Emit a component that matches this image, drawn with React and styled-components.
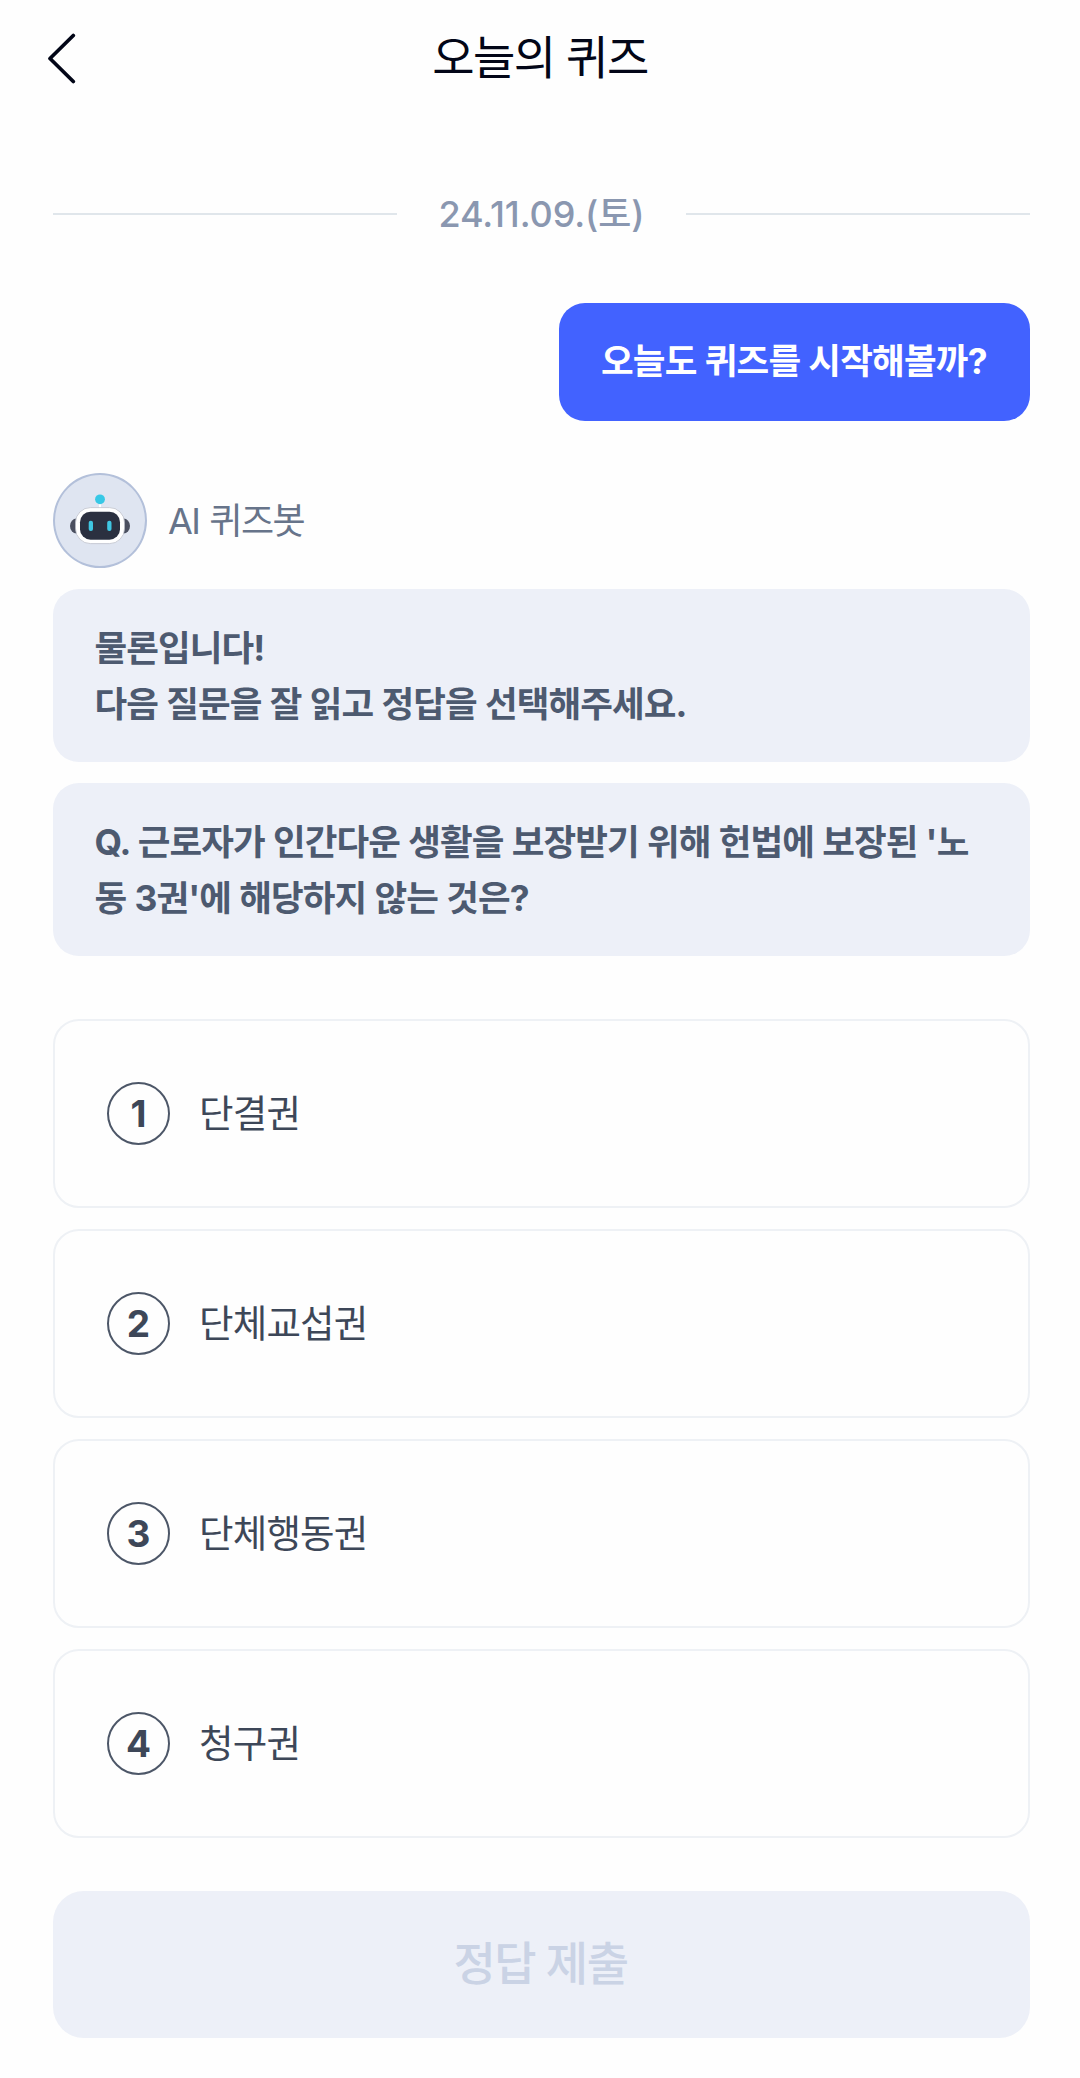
import React, { useState } from "react";
import styled, { createGlobalStyle } from "styled-components";

const options = ["단결권", "단체교섭권", "단체행동권", "청구권"];

const App = () => {
  const [selected, setSelected] = useState(null);
  return (
    <Page>
      <GlobalStyle />
      <Header>
        <BackButton aria-label="뒤로">
          <BackIcon />
        </BackButton>
        <Title>오늘의 퀴즈</Title>
      </Header>
      <DateRow>
        <Line />
        <DateText>24.11.09.(토)</DateText>
        <Line />
      </DateRow>
      <UserBubble>오늘도 퀴즈를 시작해볼까?</UserBubble>
      <BotRow>
        <Avatar>
          <BotIcon />
        </Avatar>
        <BotName>AI 퀴즈봇</BotName>
      </BotRow>
      <BotBubble>
        물론입니다!
        <br />
        다음 질문을 잘 읽고 정답을 선택해주세요.
      </BotBubble>
      <BotBubble>
        Q. 근로자가 인간다운 생활을 보장받기 위해 헌법에 보장된 '노동 3권'에
        해당하지 않는 것은?
      </BotBubble>
      <OptionList>
        {options.map((option, index) => (
          <Option
            key={option}
            $selected={selected === index}
            onClick={() => setSelected(index)}
          >
            <Number>{index + 1}</Number>
            <OptionText>{option}</OptionText>
          </Option>
        ))}
      </OptionList>
      <SubmitButton $active={selected !== null}>정답 제출</SubmitButton>
    </Page>
  );
};

const BackIcon = () => (
  <svg width="30" height="52" viewBox="0 0 30 52" fill="none">
    <path
      d="M25.3 2.5L2 25.5L25.3 48.5"
      stroke="#020617"
      strokeWidth="3.7"
      strokeLinecap="round"
      strokeLinejoin="round"
    />
  </svg>
);

const BotIcon = () => (
  <svg width="60" height="52" viewBox="0 0 60 52" fill="none">
    <ellipse cx="6.5" cy="32" rx="6.5" ry="7.5" fill="#4b5060" />
    <ellipse cx="53.5" cy="32" rx="6.5" ry="7.5" fill="#4b5060" />
    <rect x="29" y="8" width="2" height="8" fill="#fff" />
    <circle cx="30" cy="5.3" r="4.9" fill="#37c8e6" />
    <rect
      x="5.5"
      y="13.6"
      width="49"
      height="36"
      rx="15"
      fill="#fff"
      stroke="#b9bcc6"
      strokeWidth="0.7"
    />
    <rect x="10" y="17.7" width="40" height="28" rx="10.5" fill="#2b3040" />
    <rect x="18.7" y="26.7" width="4.3" height="10.3" rx="2" fill="#3fc6e2" />
    <rect x="37.2" y="26.7" width="4.3" height="10.3" rx="2" fill="#3fc6e2" />
  </svg>
);

const GlobalStyle = createGlobalStyle`
  * {
    box-sizing: border-box;
  }
  body {
    margin: 0;
    background: #fefefe;
    font-family: Inter, "Noto Sans CJK KR", sans-serif;
  }
  button {
    font-family: inherit;
    border: none;
    padding: 0;
  }
`;

const Page = styled.div`
  height: 2078px;
  padding: 0 50px 0 53px;
  display: flex;
  flex-direction: column;
`;

const Header = styled.header`
  height: 118px;
  display: grid;
  grid-template-columns: 60px 1fr 60px;
  align-items: center;
  margin: 0 -2px 0 -5px;
`;

const BackButton = styled.button`
  background: none;
  display: flex;
`;

const Title = styled.h1`
  margin: 0;
  padding-bottom: 4px;
  text-align: center;
  font-size: 46px;
  font-weight: 400;
  line-height: 60px;
  letter-spacing: -1.5px;
  color: #020617;
`;

const DateRow = styled.div`
  height: 60px;
  margin-top: 66px;
  display: flex;
  align-items: center;
`;

const Line = styled.div`
  flex: 1;
  height: 2px;
  background: #e0e6eb;
`;

const DateText = styled.span`
  width: 289px;
  padding-bottom: 1px;
  text-align: center;
  font-size: 36px;
  font-weight: 500;
  line-height: 50px;
  letter-spacing: -0.1px;
  color: #8a97b0;
`;

const UserBubble = styled.div`
  align-self: flex-end;
  width: 471px;
  height: 118px;
  margin-top: 59px;
  padding: 31px 0 0 42px;
  border-radius: 26px;
  background: #4262ff;
  color: #fff;
  font-size: 35.5px;
  font-weight: 700;
  line-height: 56px;
  letter-spacing: -0.8px;
  word-spacing: 0.5px;
  white-space: nowrap;
`;

const BotRow = styled.div`
  margin-top: 52px;
  display: flex;
  align-items: center;
  gap: 21px;
`;

const Avatar = styled.div`
  width: 94px;
  height: 95px;
  display: flex;
  justify-content: center;
  padding-top: 19px;
  border: 2px solid #b3c0da;
  border-radius: 50%;
  background: #dfe5f1;
`;

const BotName = styled.span`
  font-size: 36px;
  line-height: 50px;
  letter-spacing: -1.5px;
  word-spacing: 1.2px;
  color: #67748a;
`;

const BotBubble = styled.div`
  height: 173px;
  margin-top: 21px;
  padding: 32px 40px 0 41.5px;
  border-radius: 26px;
  background: #edf0f8;
  color: #4d5a70;
  font-size: 35.5px;
  font-weight: 700;
  line-height: 55.5px;
  letter-spacing: -0.9px;
  word-spacing: 0.7px;
  word-break: break-all;
`;

const OptionList = styled.div`
  margin-top: 63px;
  display: flex;
  flex-direction: column;
  gap: 21px;
`;

const Option = styled.button`
  height: 189px;
  padding-left: 52px;
  display: flex;
  align-items: center;
  gap: 29px;
  border: 2px solid ${(props) => (props.$selected ? "#4262ff" : "#eef1f5")};
  border-radius: 26px;
  background: #fefefe;
  color: #3d4758;
`;

const Number = styled.span`
  width: 63px;
  height: 63px;
  display: flex;
  align-items: center;
  justify-content: center;
  border: 2px solid #4d5768;
  border-radius: 50%;
  font-size: 37px;
  font-weight: 700;
`;

const OptionText = styled.span`
  font-size: 37.5px;
  line-height: 56px;
  letter-spacing: -0.8px;
`;

const SubmitButton = styled.button`
  height: 147px;
  margin-top: 53px;
  padding: 0 2px 10px 0;
  border-radius: 31px;
  background: ${(props) => (props.$active ? "#4262ff" : "#edf0f8")};
  color: ${(props) => (props.$active ? "#fff" : "#cad3e5")};
  font-size: 46px;
  font-weight: 500;
  letter-spacing: -1.5px;
`;

export default App;
